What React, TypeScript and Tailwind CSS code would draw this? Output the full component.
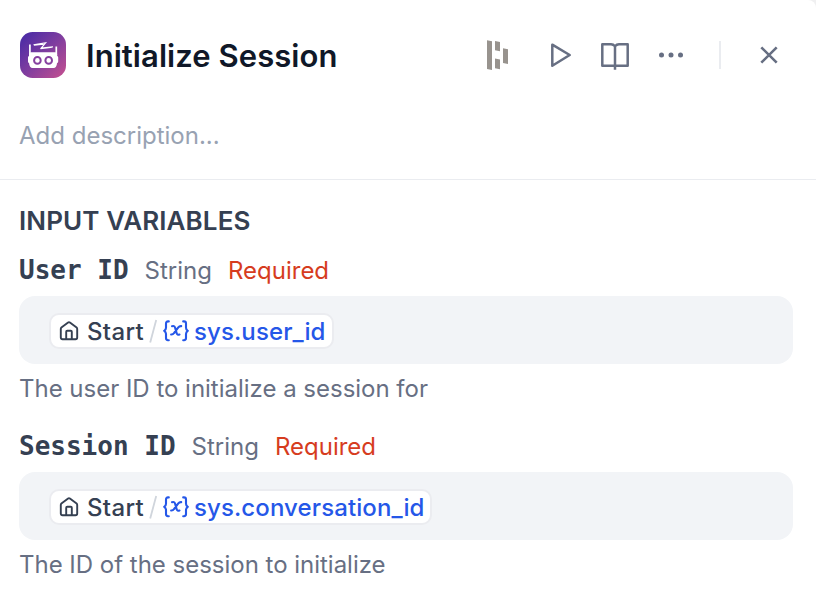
import React from 'react';

const sans = "font-['Inter','Liberation_Sans',sans-serif]";

function AgentLogo() {
  return (
    <svg width="46" height="46" viewBox="0 0 46 46" className="shrink-0">
      <defs>
        <linearGradient id="logo" x1="0" y1="0" x2="1" y2="1">
          <stop offset="0" stopColor="#4329a6" />
          <stop offset="0.5" stopColor="#7f3d9f" />
          <stop offset="1" stopColor="#c6508f" />
        </linearGradient>
      </defs>
      <rect width="46" height="46" rx="12.5" fill="url(#logo)" />
      <path d="M9.900 12.500v10M36.300 14.500v8" stroke="#fff" strokeWidth="1.700" fill="none" />
      <path d="M13.500 12.700l12.200-1.900-4.500 5.300 11.800-1.300M14 13.300l9.500-1M20.500 16.600l12-1.400" stroke="#fff" strokeWidth="1.100" fill="none" />
      <path d="M11 20.200h24.200q2 0 2 2v1.800q1 .4 1 1.600v4q0 1.200-1.200 1.600-.3 4.800-3.500 4.800H12.600q-3.200 0-3.500-4.800Q8 30.800 8 29.600v-4q0-1.200 1-1.600v-1.800q0-2 2-2z" fill="#fff" />
      <g fill="#fff" stroke="#85409f" strokeWidth="2">
        <circle cx="17.400" cy="28.400" r="3.300" />
        <circle cx="28.700" cy="28.400" r="3.300" />
      </g>
    </svg>
  );
}

function HomeIcon() {
  return (
    <svg width="20" height="20" viewBox="0 0 20 20" fill="none" stroke="#354052" strokeWidth="1.900" strokeLinejoin="round" className="shrink-0">
      <path d="M1.800 7.900q0-.8.6-1.300l6.700-5.100q.9-.7 1.800 0l6.700 5.100q.6.500.6 1.300v8.700q0 1.700-1.700 1.700h-13q-1.700 0-1.700-1.700z" />
      <path d="M7.200 18v-7.200q0-1 1-1h3.600q1 0 1 1V18" />
    </svg>
  );
}

function VariableIcon() {
  return (
    <svg width="26" height="22" viewBox="0 0 26 22" fill="none" stroke="#2557e8" strokeWidth="2.100" strokeLinecap="round" strokeLinejoin="round" className="shrink-0">
      <path d="M5.800 1.400H5Q3 1.400 3 3.500v4.200q0 2-1.800 3.100Q3 11.900 3 13.900v4.200q0 2.100 2 2.100h.8" />
      <path d="M20.200 1.400h.8q2 0 2 2.100v4.200q0 2 1.800 3.100-1.800 1.100-1.800 3.100v4.200q0 2.100-2 2.100h-.8" />
      <path d="M9 6.200q2.300-.8 3 1.300l1.700 5.800q.6 1.900 2.800 1.200M18.200 6.100q-1.700-.2-2.900 1.300l-4.200 5.600q-1.200 1.700-3 1.500" />
    </svg>
  );
}

interface FieldProps {
  name: string;
  variable: string;
  help: string;
  pill: string;
}

function Field({ name, variable, help, pill }: FieldProps) {
  return (
    <section className="h-44">
      <div className="flex h-[52px] items-baseline leading-[52px]">
        <span className="whitespace-pre font-['DejaVu_Sans_Mono',monospace] text-[26px] font-bold text-[#354052]">{name}</span>
        <span className="ml-4 text-2xl leading-[52px] text-[#676f83]">String</span>
        <span className="ml-4 text-2xl leading-[52px] text-[#d63c1e]">Required</span>
      </div>
      <div className="flex h-[68px] w-[774px] items-center rounded-[16px] bg-[#f2f4f7] pl-[30px] pt-0.5">
        <div className={`flex h-9 items-center rounded-[10px] border-2 border-[#ebecf0] bg-white pl-2 ${pill}`}>
          <HomeIcon />
          <span className="ml-2 w-[58px] whitespace-nowrap pt-px text-2xl font-medium tracking-[0.35px] text-[#354052]">Start</span>
          <svg width="14" height="26" viewBox="0 0 14 26" className="ml-1 shrink-0">
            <path d="M7.200 2L1.200 24.500" stroke="#d0d5dc" strokeWidth="1.800" />
          </svg>
          <VariableIcon />
          <span className="ml-[5px] whitespace-nowrap pt-px text-2xl font-medium tracking-[0.11px] text-[#2557e8]">{variable}</span>
        </div>
      </div>
      <p className="h-[50px] text-2xl leading-[50px] tracking-[-0.015px] text-[#676f83]">{help}</p>
    </section>
  );
}

export default function App() {
  return (
    <div className="w-[816px] bg-[#f0f0f1]">
      <main className={`h-[600px] w-[816px] overflow-hidden rounded-tr-[8px] bg-white ${sans}`}>
        <header className="h-[180px] border-b border-[#eaecf0] pl-5">
          <div className="flex h-[110px] items-center">
            <AgentLogo />
            <h1 className="ml-5 w-[400px] whitespace-nowrap pt-0.5 text-[31px] font-semibold tracking-[0.06px] text-[#101828]">Initialize Session</h1>
            <svg width="24" height="30" viewBox="0 0 24 30" fill="#98938e" className="shrink-0">
              <path d="M1 .2l5 1v28.800l-5-1zM9 1l5 1v9.300l-5-1zM9 18.600l5 1v9.700l-5-1zM17 8.200l5 1v14.800l-5-1z" />
            </svg>
            <svg width="24" height="28" viewBox="0 0 24 28" fill="none" stroke="#676f83" strokeWidth="2.500" strokeLinejoin="round" className="ml-[39px] shrink-0">
              <path d="M3.300 3.700L20.700 14 3.300 24.800z" />
            </svg>
            <svg width="30" height="30" viewBox="0 0 30 30" fill="none" stroke="#676f83" strokeWidth="2.500" strokeLinejoin="round" className="ml-[27px] shrink-0">
              <path d="M15 6.300v23.500M15 6.300q-1.700-2-4-2H2.300v21.500h25.400V4.300H19q-2.300 0-4 2z" />
            </svg>
            <svg width="26" height="6" viewBox="0 0 26 6" fill="#676f83" className="ml-[28px] shrink-0">
              <circle cx="3.500" cy="3" r="2.500" /><circle cx="13" cy="3" r="2.500" /><circle cx="22.500" cy="3" r="2.500" />
            </svg>
            <span className="ml-[35px] h-7 w-0.5 shrink-0 bg-[#eaecf0]" />
            <svg width="18" height="18" viewBox="0 0 18 18" stroke="#676f83" strokeWidth="2.600" className="ml-[39px] shrink-0">
              <path d="M1.300 1.300l15.400 15.400M16.700 1.300L1.300 16.700" />
            </svg>
          </div>
          <p className="-ml-px h-[52px] text-2xl leading-[52px] text-[#98a2b2]">Add description...</p>
        </header>
        <div className="pl-[19px] pt-4">
          <h2 className="h-12 text-[26px] font-semibold leading-[50px] tracking-[0.1px] text-[#354052]">INPUT VARIABLES</h2>
          <Field name="User ID" variable="sys.user_id" help="The user ID to initialize a session for" pill="w-[285px]" />
          <Field name="Session ID" variable="sys.conversation_id" help="The ID of the session to initialize" pill="w-[383px]" />
        </div>
      </main>
    </div>
  );
}
